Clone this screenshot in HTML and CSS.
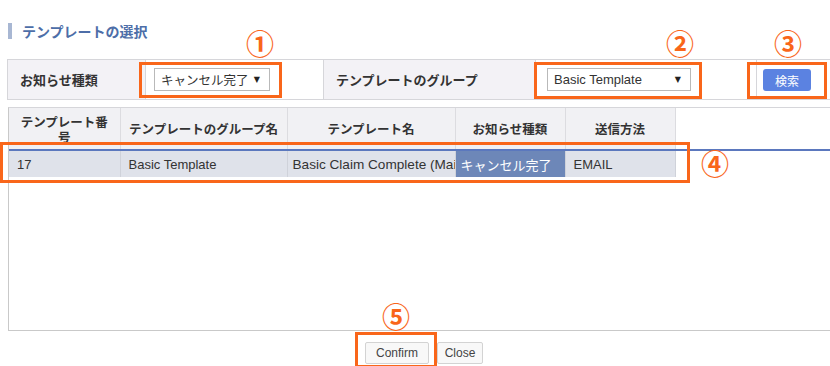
FILE: index.html
```html
<!DOCTYPE html>
<html lang="ja">
<head>
    <meta charset="UTF-8">
    <title>テンプレートの選択</title>
    <link rel="stylesheet" href="styles.css">
</head>
<body>
<div class="page">

    <h2 class="title">テンプレートの選択</h2>

    <table class="filter">
        <colgroup>
            <col class="fc1">
            <col class="fc2">
            <col class="fc3">
            <col class="fc4">
            <col class="fc5">
        </colgroup>
        <tr>
            <th>お知らせ種類</th>
            <td class="cell-kind">
                <div class="select select-kind"><span class="jp">キャンセル完了</span><span class="arrow">▼</span></div>
            </td>
            <th>テンプレートのグループ</th>
            <td class="cell-group">
                <div class="select select-group">Basic Template<span class="arrow">▼</span></div>
            </td>
            <td class="cell-btn"><button class="btn-search">検索</button></td>
        </tr>
    </table>

    <div class="grid">
        <table class="grid-table">
            <colgroup>
                <col class="gc1">
                <col class="gc2">
                <col class="gc3">
                <col class="gc4">
                <col class="gc5">
                <col>
            </colgroup>
            <thead>
                <tr>
                    <th class="h-no">テンプレート番号</th>
                    <th>テンプレートのグループ名</th>
                    <th>テンプレート名</th>
                    <th>お知らせ種類</th>
                    <th>送信方法</th>
                    <th class="empty"></th>
                </tr>
            </thead>
            <tbody>
                <tr class="selected">
                    <td>17</td>
                    <td>Basic Template</td>
                    <td class="clip">Basic Claim Complete (Mail)</td>
                    <td class="active">キャンセル完了</td>
                    <td>EMAIL</td>
                    <td class="empty"></td>
                </tr>
            </tbody>
        </table>
    </div>

    <div class="actions">
        <button class="btn btn-confirm">Confirm</button>
        <button class="btn btn-close">Close</button>
    </div>

    <!-- annotation marks drawn over the screen -->
    <div class="mark box1"></div>
    <div class="mark box2"></div>
    <div class="mark box3"></div>
    <div class="mark box4"></div>
    <div class="mark box5"></div>
    <span class="num n1">①</span>
    <span class="num n2">②</span>
    <span class="num n3">③</span>
    <span class="num n4">④</span>
    <span class="num n5">⑤</span>
</div>
</body>
</html>
```

FILE: styles.css
```css
html, body {
    margin: 0;
    padding: 0;
    background: #fff;
    overflow: hidden;
}

body {
    font-family: "Liberation Sans", "Noto Sans CJK JP", sans-serif;
    font-size: 13px;
    color: #333;
}

.page {
    position: relative;
    width: 830px;
    height: 366px;
    padding-left: 7px;
    box-sizing: border-box;
}

/* page title with the small bar on its left */
.title {
    position: relative;
    margin: 0 0 0 1px;
    padding: 23px 0 0 14px;
    height: 16px;
    line-height: 16px;
    font-family: "Noto Sans CJK JP", sans-serif;
    font-size: 14px;
    font-weight: bold;
    color: #4d6ea8;
}

.title::before {
    content: "";
    position: absolute;
    left: 0;
    top: 23px;
    width: 4px;
    height: 16px;
    background: #a8b7d3;
}

/* search conditions */
.filter {
    margin-top: 20px;
    border-collapse: collapse;
    table-layout: fixed;
    width: 833px;
}

.fc1 { width: 138px; }
.fc2 { width: 178px; }
.fc3 { width: 212px; }
.fc4 { width: 221px; }
.fc5 { width: 84px; }

.filter th,
.filter td {
    height: 39px;
    border: 1px solid #d6d6da;
    padding: 0;
    vertical-align: middle;
}

.filter th {
    background: #f3f2f6;
    text-align: left;
    padding-left: 12px;
    font-family: "Noto Sans CJK JP", sans-serif;
    font-size: 13px;
    font-weight: bold;
    color: #333;
}

.filter td.cell-kind { padding-left: 8px; }
.filter td.cell-group { padding-left: 11px; }
.filter td.cell-btn { padding-left: 6px; }

.select {
    position: relative;
    height: 21px;
    line-height: 21px;
    border: 1px solid #b9b9b9;
    background: #fff;
    padding-left: 6px;
    font-size: 13px;
    color: #333;
    white-space: nowrap;
}

.select .jp {
    font-family: "Noto Sans CJK JP", sans-serif;
    font-size: 12.5px;
}

.select-kind { width: 108px; }
.select-group { width: 136px; }

.select .arrow {
    position: absolute;
    right: 9px;
    top: 0;
    font-family: "DejaVu Sans", sans-serif;
    font-size: 8px;
    color: #222;
}

.btn-search {
    width: 48px;
    height: 22px;
    margin-top: 1px;
    padding: 0;
    border: none;
    border-radius: 3px;
    background: #5b82e1;
    color: #fff;
    font-family: "Noto Sans CJK JP", sans-serif;
    font-size: 12px;
}

/* result grid */
.grid {
    width: 840px;
    height: 222px;
    margin: 7px 0 0 1px;
    border-left: 1px solid #c9c9c9;
    border-top: 1px solid #d6d6da;
    border-bottom: 1px solid #c9c9c9;
    overflow: hidden;
}

.grid-table {
    border-collapse: collapse;
    table-layout: fixed;
    width: 830px;
}

.gc1 { width: 111px; }
.gc2 { width: 167px; }
.gc3 { width: 168px; }
.gc4 { width: 110px; }
.gc5 { width: 110px; }

.grid-table th {
    height: 41px;
    padding: 0 4px;
    background: #f1f1f4;
    border-right: 1px solid #dcdce0;
    border-bottom: 2px solid #5b78be;
    font-family: "Noto Sans CJK JP", sans-serif;
    font-size: 12.5px;
    font-weight: bold;
    line-height: 15px;
    color: #333;
    white-space: nowrap;
    overflow: hidden;
}

.grid-table th.h-no {
    padding: 0 8px;
    white-space: normal;
}

.grid-table th.empty {
    background: #fff;
    border-right: none;
}

.grid-table td {
    height: 26px;
    padding: 0 8px;
    border-right: 1px solid #cfd2da;
    white-space: nowrap;
    overflow: hidden;
    font-size: 13px;
    color: #333;
}

.grid-table td.clip {
    padding: 0 0 0 5px;
    font-size: 13.6px;
}

.selected td {
    background: #dfe2ea;
}

.selected td.active {
    padding-left: 5px;
    background: #6d87b8;
    color: #fff;
    font-family: "Noto Sans CJK JP", sans-serif;
}

.selected td.empty {
    background: #fff;
    border-right: none;
}

/* bottom buttons */
.actions {
    display: flex;
    justify-content: center;
    gap: 8px;
    margin-top: 11px;
    padding-left: 11px;
}

.btn {
    height: 22px;
    padding: 0;
    border: 1px solid #d3d3d3;
    border-radius: 2px;
    background: #f8f8f8;
    font-family: "Liberation Sans", sans-serif;
    font-size: 12px;
    color: #444;
}

.btn-confirm { width: 64px; }
.btn-close { width: 46px; }

/* annotations */
.mark {
    position: absolute;
    border: 3px solid #f9661a;
    box-sizing: border-box;
}

.box1 { left: 139px; top: 62px; width: 143px; height: 36px; }
.box2 { left: 534px; top: 62px; width: 168px; height: 37px; }
.box3 { left: 747px; top: 62px; width: 80px; height: 37px; }
.box4 { left: 0; top: 142px; width: 690px; height: 41px; }
.box5 { left: 355px; top: 332px; width: 82px; height: 36px; }

.num {
    position: absolute;
    font-family: "Noto Sans CJK JP", sans-serif;
    font-size: 28px;
    font-weight: bold;
    line-height: 28px;
    color: #f9661a;
}

.n1 { left: 246px; top: 29px; }
.n2 { left: 666px; top: 29px; }
.n3 { left: 774px; top: 29px; }
.n4 { left: 701px; top: 149px; }
.n5 { left: 382px; top: 302px; }
```
